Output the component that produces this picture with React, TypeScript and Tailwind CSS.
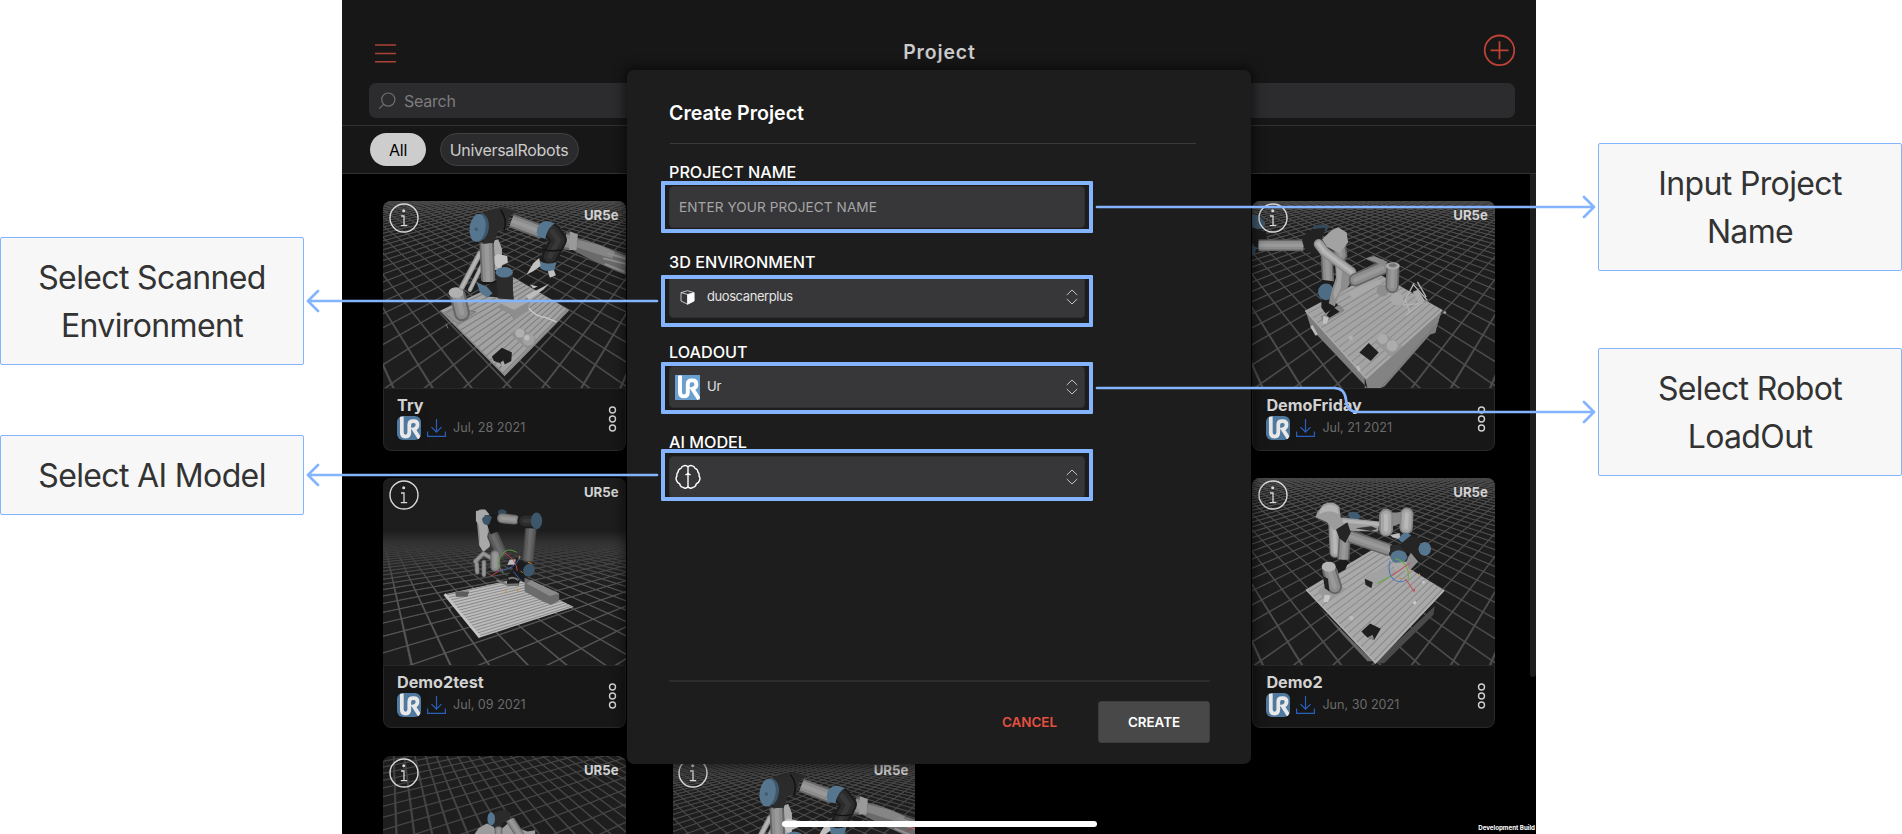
import type { ReactNode } from "react";

type Pt = [number, number];

/* ---------- icons ---------- */

function UrLogo({ className }: { className: string }) {
  return (
    <svg viewBox="0 0 25 25" className={className}>
      <rect width="25" height="25" fill="currentColor" />
      <path
        d="M5 0.6V17.2Q5 21.4 9 21.4Q12.8 21.4 12.8 17.2V9Q12.8 5.4 16.6 5.4H17.6Q21.4 5.4 21.4 9.2Q21.4 12.9 17.4 13.8L24 24"
        fill="none"
        stroke="white"
        strokeWidth="3.9"
      />
    </svg>
  );
}

function InfoIcon() {
  return (
    <svg viewBox="0 0 30 30" className="size-[30px]" fill="none" stroke="#d8d8d8">
      <circle cx="15" cy="15" r="14" strokeWidth="1.4" />
      <circle cx="14.7" cy="7.8" r="1.5" fill="#d8d8d8" stroke="none" />
      <path d="M12 13H15V22.5M11.8 22.6H18.2" strokeWidth="1.3" />
    </svg>
  );
}

function DownloadIcon() {
  return (
    <svg viewBox="0 0 19 18" className="h-[18px] w-[19px]" fill="none" stroke="#2a60bd" strokeWidth="1.2">
      <path d="M9.5 0V13M4.5 8.2L9.5 13.2L14.5 8.2M0.6 12.5V17.3H18.4V12.5" />
    </svg>
  );
}

function MoreIcon() {
  return (
    <svg viewBox="0 0 9 26" className="h-[26px] w-[9px]" fill="none" stroke="#cfcfcf" strokeWidth="1.4">
      <circle cx="4.5" cy="4" r="3" />
      <circle cx="4.5" cy="13" r="3" />
      <circle cx="4.5" cy="22" r="3" />
    </svg>
  );
}

function Updown() {
  return (
    <svg viewBox="0 0 12 16" className="h-4 w-3" fill="none" stroke="#c4c4c4" strokeWidth="1">
      <path d="M0.8 6L6 1L11.2 6M0.8 10L6 15L11.2 10" />
    </svg>
  );
}

function CubeIcon() {
  return (
    <svg viewBox="0 0 15 15" className="size-[15px]" fill="none" stroke="#e8e8e8" strokeWidth="0.8">
      <path d="M7.5 0.7L14 2.6V11L7.5 14.2L1 11V2.6ZM1 2.6L7.5 4.4V14.2" />
      <path d="M7.5 4.4L14 2.6V11L7.5 14.2Z" fill="#fff" />
    </svg>
  );
}

function BrainIcon() {
  return (
    <svg viewBox="0 0 26 26" className="size-[26px]" fill="none" stroke="#fff" strokeWidth="1.4" strokeLinejoin="round">
      <path d="M13 3Q11.5 1 8.6 1.8Q6.6 2.4 6 4.4Q3.4 5 2.9 8.4Q1.4 9.6 2 12Q0.2 14 1.8 17Q2.4 19 4.6 19.6Q5 22.6 8 23.4Q11 25.4 13 22.8" />
      <path d="M13 3Q14.5 1 17.4 1.8Q19.4 2.4 20 4.4Q22.6 5 23.1 8.4Q24.6 9.6 24 12Q25.8 14 24.2 17Q23.6 19 21.4 19.6Q21 22.6 18 23.4Q15 25.4 13 22.8" />
      <path d="M13 2.6V23M10.4 10.8Q12.6 10.6 13 8.6Q13.4 10.6 15.6 10.8" />
    </svg>
  );
}

/* ---------- 3D previews ---------- */

interface FloorProps {
  left: Pt;
  right: Pt;
  base: number;
  origin: number;
  stepL: number;
  stepR: number;
  color?: string;
}

/* Two families of floor lines, each converging on its vanishing point. */
function Floor({ left, right, base, origin, stepL, stepR, color = "#505050" }: FloorProps) {
  const ks = Array.from({ length: 81 }, (_, i) => i - 40);
  const ray = (vp: Pt, x: number) => {
    const ex = vp[0] + (x - vp[0]) * 1.05;
    const ey = vp[1] + (base - vp[1]) * 1.05;
    return `M${vp[0]} ${vp[1]}L${ex - 2.6} ${ey}H${ex + 2.6}Z`;
  };
  return (
    <g fill={color} stroke={color} strokeWidth="2.2">
      {ks.map((k) => (
        <path key={`l${k}`} d={ray(left, origin + k * stepL)} />
      ))}
      {ks.map((k) => (
        <path key={`r${k}`} d={ray(right, origin + k * stepR)} />
      ))}
    </g>
  );
}

function mix(a: Pt, b: Pt, t: number): Pt {
  return [a[0] + (b[0] - a[0]) * t, a[1] + (b[1] - a[1]) * t];
}

/* Slatted table top: slats run from edge a-b to edge d-c. */
function Slats({ a, b, c, d, n, fill = "#a2a2a2", line = "#7d7d7d" }: { a: Pt; b: Pt; c: Pt; d: Pt; n: number; fill?: string; line?: string }) {
  return (
    <g>
      <polygon points={[a, b, c, d].join(" ")} fill={fill} />
      {Array.from({ length: n }, (_, i) => {
        const t = (i + 0.6) / n;
        const p = mix(a, b, t);
        const q = mix(d, c, t);
        return <line key={i} x1={p[0]} y1={p[1]} x2={q[0]} y2={q[1]} stroke={line} strokeWidth="3.2" />;
      })}
    </g>
  );
}

const shades = {
  grey: ["#666666", "#8c8c8c", "#999999"],
  light: ["#858585", "#a6a6a6", "#b8b8b8"],
  dark: ["#1c1c1c", "#2c2c2c", "#383838"],
  blue: ["#3d566a", "#56758e", "#6283a0"],
  dim: ["#484848", "#5d5d5d", "#6b6b6b"],
};

function Tube({ d, w, tone = "grey", cap = "round" }: { d: string; w: number; tone?: keyof typeof shades; cap?: "round" | "butt" }) {
  const s = shades[tone];
  return (
    <g fill="none" strokeLinecap={cap} strokeLinejoin="round">
      <path d={d} stroke={s[0]} strokeWidth={w} />
      <path d={d} stroke={s[1]} strokeWidth={w * 0.74} />
      <path d={d} stroke={s[2]} strokeWidth={w * 0.3} />
    </g>
  );
}

function ArmWithGripper() {
  return (
    <g>
      <path d="M605 140L650 150L700 168L735 184L767 196V255L740 244L700 226L655 205L610 182Z" fill="#6a6a6a" />
      <path d="M625 150L690 166L735 186L728 206L668 188L620 172Z" fill="#858585" />
      <path d="M700 205L767 222M712 190L767 206M705 222L764 246" stroke="#8e8e8e" strokeWidth="6" />
      <Tube d="M585 152L605 156" w={52} cap="butt" />
      <path d="M600 124L624 134L620 180L598 180" fill="#9a9a9a" />
      <Tube d="M546 124L566 150L540 200" w={50} tone="dark" />
      <Tube d="M425 92L515 126" w={42} cap="butt" />
      <path d="M500 128Q502 96 530 93L556 100Q534 110 526 146L506 142Z" fill="#56758e" />
      <path d="M506 212Q530 228 560 216L554 238Q532 250 512 236Z" fill="#56758e" />
      <path d="M516 176Q540 188 572 180" stroke="#111" strokeWidth="4" fill="none" />
      <path d="M508 204L490 220L470 254L490 244L512 228ZM534 244L552 240L558 256L540 264Z" fill="#c0c0c0" />
    </g>
  );
}

function TallArm() {
  return (
    <g>
      <path d="M372 152L385 148L396 176V240H374Z" fill="#a8a8a8" />
      <path d="M362 206L384 192L412 198L414 218L396 226L388 240L374 222Z" fill="#c4c4c4" />
      <Tube d="M276 292L330 190" w={17} tone="light" />
      <Tube d="M300 300L336 226" w={13} tone="light" />
      <Tube d="M350 160L355 276" w={43} cap="butt" />
      <path d="M322 282Q344 300 378 278L396 262L402 300L384 322L350 320Z" fill="#232323" />
      <path d="M378 250Q402 266 429 250V300L432 330L384 326Z" fill="#2b2b2b" />
      <path d="M332 274Q354 290 380 272" stroke="#111" strokeWidth="4" fill="none" />
      <ellipse cx="403" cy="247" rx="26" ry="16" fill="#56758e" />
      <path d="M320 278L350 290L368 310L352 324L330 308Z" fill="#56758e" />
      <path d="M340 68L366 58L402 52L440 64L416 82L410 118L384 124L372 158L340 162Z" fill="#2b2b2b" />
      <path d="M392 60Q414 88 402 122" stroke="#0e0e0e" strokeWidth="4" fill="none" />
      <ellipse cx="330" cy="113" rx="27" ry="42" fill="#3d566a" transform="rotate(8 330 113)" />
      <ellipse cx="323" cy="114" rx="24" ry="42" fill="#56758e" transform="rotate(8 323 114)" />
      <circle cx="319" cy="118" r="5" fill="#43596c" />
    </g>
  );
}

function SceneTry() {
  return (
    <>
      <Floor left={[-258, -125]} right={[1068, -125]} base={582} origin={411} stepL={115.5} stepR={115.5} />
      <Slats a={[212, 362]} b={[404, 556]} c={[596, 360]} d={[430, 262]} n={15} />
      <path d="M212 362L404 556L596 360" stroke="#8a8a8a" strokeWidth="5" fill="none" />
      <path d="M474 352Q494 380 530 384L560 396" stroke="#c9c9c9" strokeWidth="4" fill="none" />
      <path d="M468 318L538 282L520 300L478 330ZM480 284L504 290L490 296Z" fill="#bdbdbd" />
      <path d="M390 340L432 360L476 336V362L430 392L426 376L388 356Z" fill="#8d8d8d" />
      <path d="M390 340L440 330L476 336L432 360Z" fill="#a9a9a9" />
      <path d="M366 500L396 474L426 488L424 514L404 524L402 532L390 520L372 514Z" fill="#1e1e1e" />
      <path d="M392 518L400 512L406 528L398 534Z" fill="#aaa" />
      <path d="M420 432L450 412L498 446L472 478Z" fill="#909090" />
      <circle cx="450" cy="430" r="14" fill="#b0b0b0" />
      <circle cx="476" cy="450" r="18" fill="#a2a2a2" />
      <circle cx="471" cy="444" r="8" fill="#bcbcbc" />
      <path d="M226 372L250 356L318 366L262 402ZM228 402L234 416" fill="#8f8f8f" stroke="#777" strokeWidth="3" />
      <Tube d="M264 318L276 370" w={48} tone="grey" />
      <ellipse cx="258" cy="308" rx="22" ry="16" fill="#b0b0b0" />
      <TallArm />
      <ArmWithGripper />
    </>
  );
}

function SceneDemo2Test() {
  return (
    <>
      <Floor left={[20, 130]} right={[1500, 130]} base={600} origin={125} stepL={116} stepR={205} color="#585858" />
      <rect x="39" y="39" width="730" height="330" fill="url(#haze)" />
      <Slats a={[330, 518]} b={[224, 388]} c={[440, 342]} d={[612, 427]} n={17} fill="#bdbdbd" line="#8c8c8c" />
      <path d="M224 388L330 518" stroke="#c6c6c6" strokeWidth="8" />
      <path d="M256 380H298L292 396H258ZM234 424L244 434L238 440Z" fill="#5c5c5c" />
      <Tube d="M336 150L344 236" w={34} tone="light" />
      <path d="M318 138L346 134L358 148L352 200L360 244L340 262L328 240L332 186L318 168Z" fill="#a8a8a8" />
      <Tube d="M316 290L340 266L372 284M320 296L322 322M342 292L342 330" w={14} />
      <Tube d="M370 214L392 262" w={36} tone="dim" />
      <Tube d="M376 270V306" w={30} tone="grey" />
      <Tube d="M483 190L474 288" w={34} tone="dim" cap="butt" />
      <path d="M344 152L372 148L390 170L386 198L362 208L354 186Z" fill="#1a1a1a" />
      <path d="M336 162Q350 142 366 156L358 178Q340 186 336 162Z" fill="#3c5568" />
      <path d="M384 140Q396 126 410 140L406 164H388Z" fill="#344b5c" />
      <Tube d="M396 160L434 164" w={30} tone="grey" />
      <Tube d="M464 168L492 168" w={44} tone="dark" />
      <ellipse cx="500" cy="168" rx="17" ry="25" fill="#3d566a" />
      <path d="M412 292L440 282L482 300L476 336L450 346L446 362H410L414 332L430 312Z" fill="#1c1c1c" />
      <path d="M420 284H438L434 300H412Z" fill="#bbb" />
      <ellipse cx="477" cy="316" rx="17" ry="20" fill="#3d566a" transform="rotate(25 477 316)" />
      <path d="M464 338L568 386V408L544 420L522 412L464 380Z" fill="#6b6b6b" />
      <path d="M484 346L568 386L540 394L470 356Z" fill="#8a8a8a" />
      <path d="M380 346L412 360L446 358M416 342Q430 334 446 346" stroke="#777" strokeWidth="6" fill="none" />
      <g fill="none" strokeWidth="3">
        <path d="M440 262Q414 246 396 268Q376 296 400 324" stroke="#5d9a3e" />
        <path d="M404 264Q440 284 442 318M362 334L398 312" stroke="#c23e48" />
        <path d="M388 318Q436 314 452 274M430 320L452 346" stroke="#3d62b4" />
        <path d="M448 272V282M474 292L486 296M452 318L458 324M408 374V386M444 372V382" stroke="#c98a2c" />
      </g>
    </>
  );
}

function SceneFriday() {
  return (
    <>
      <Floor left={[-258, -125]} right={[1068, -125]} base={582} origin={411} stepL={115.5} stepR={115.5} />
      <path d="M198 362L376 562V595H384L216 418ZM424 595L606 366L596 396L588 430L572 434L436 590Z" fill="#7c7c7c" />
      <path d="M376 562L606 360L596 400L580 412L424 595H384Z" fill="#838383" />
      <Slats a={[198, 362]} b={[380, 566]} c={[608, 360]} d={[410, 248]} n={14} fill="#a4a4a4" line="#8a8a8a" />
      <path d="M198 362L380 566L608 360" stroke="#a9a9a9" strokeWidth="5" fill="none" />
      <path d="M216 408L232 436M354 528L360 544" stroke="#bbb" strokeWidth="8" />
      <path d="M360 488L388 460L418 488L394 514Z" fill="#1f1f1f" />
      <path d="M408 458L432 430L490 470L456 502Z" fill="#969696" />
      <circle cx="430" cy="448" r="15" fill="#acacac" />
      <circle cx="458" cy="468" r="17" fill="#acacac" />
      <circle cx="334" cy="444" r="7" fill="#b0b0b0" />
      <path d="M38 72L60 78L78 98L72 116H38Z" fill="#3d566a" />
      <path d="M38 112L80 128L84 150L48 168L38 160Z" fill="#1b1b1b" />
      <path d="M38 166L52 172L46 192H38Z" fill="#34495a" />
      <Tube d="M58 166H192" w={34} cap="butt" />
      <Tube d="M262 196L266 276" w={36} tone="grey" cap="butt" />
      <path d="M218 114Q238 96 268 108L262 124L230 122Z" fill="#34495a" />
      <path d="M188 150Q196 124 232 116L258 114L246 148L236 192Q196 194 188 150Z" fill="#222" />
      <path d="M246 270L282 274L280 330L300 350L296 374L264 378L246 354Z" fill="#1d1d1d" />
      <ellipse cx="260" cy="306" rx="24" ry="25" fill="#4e6c84" />
      <Tube d="M296 140L304 196" w={40} tone="grey" />
      <path d="M248 148L276 122L296 112L322 128L326 158L300 190L262 170Z" fill="#a2a2a2" />
      <path d="M286 206L318 226L338 262L326 292L300 312L286 350L268 340L278 300L290 262Z" fill="#8d8d8d" />
      <path d="M290 214L308 240L304 296L286 330L282 310L294 270Z" fill="#a3a3a3" />
      <Tube d="M238 162L256 186L336 246" w={30} tone="light" />
      <Tube d="M348 270L430 234" w={40} tone="grey" />
      <path d="M326 308L420 268L428 280L340 326Z" fill="#a9a9a9" />
      <path d="M378 206L404 198L446 216L430 226Z" fill="#8a8a8a" />
      <circle cx="430" cy="302" r="18" fill="#8e8e8e" />
      <Tube d="M460 238L458 290" w={40} tone="grey" />
      <ellipse cx="460" cy="228" rx="21" ry="11" fill="#a8a8a8" />
      <ellipse cx="460" cy="226" rx="12" ry="6" fill="#777" />
      <circle cx="472" cy="327" r="19" fill="#a9a9a9" />
      <path d="M524 280L490 344M520 282L564 332M534 276L560 322M490 346L552 340M500 376L546 340M498 330L510 366" stroke="#b3b3b3" strokeWidth="4" fill="none" />
      <path d="M520 306L536 300L556 332L540 344Z" fill="#a8a8a8" />
      <path d="M244 380L300 344L316 362L252 402Z" fill="#858585" />
      <path d="M262 376L280 350L300 366L270 384Z" fill="#1d1d1d" />
      <path d="M252 378L268 384L262 402H250Z" fill="#c0c0c0" />
      <circle cx="616" cy="368" r="4" fill="#aaa" />
    </>
  );
}

function SceneDemo2() {
  return (
    <>
      <Floor left={[-258, -119]} right={[1068, -119]} base={588} origin={411} stepL={115.5} stepR={115.5} />
      <path d="M586 424L582 450L434 596H410L430 572Z" fill="#4a4a4a" />
      <path d="M240 428L400 590H384L310 510Z" fill="#666" />
      <Slats a={[200, 374]} b={[408, 594]} c={[614, 376]} d={[410, 248]} n={16} fill="#a9a9a9" line="#8b8b8b" />
      <path d="M200 374L408 594L614 376" stroke="#b0b0b0" strokeWidth="5" fill="none" />
      <path d="M366 500L392 476L424 492L404 526L384 518Z" fill="#1f1f1f" />
      <path d="M384 518L400 510L404 526Z" fill="#888" />
      <path d="M376 338L440 304L472 318L408 366L378 356Z" fill="#a2a2a2" />
      <path d="M376 342L400 352L396 370L378 360Z" fill="#222" />
      <Tube d="M284 180L288 262" w={34} tone="light" />
      <Tube d="M316 210L312 284" w={36} tone="grey" cap="butt" />
      <path d="M326 146Q346 132 364 154L356 166L330 160Z" fill="#3f5c72" />
      <path d="M228 156L234 142L252 118Q280 104 300 126L304 158L330 160L420 170L416 200L340 198L284 196L262 172Z" fill="#9c9c9c" />
      <path d="M244 132Q268 108 294 126L298 148Q270 130 240 148Z" fill="#b4b4b4" />
      <path d="M310 168L420 178" stroke="#b4b4b4" strokeWidth="10" />
      <path d="M290 194L324 172L334 202L318 234L300 220Z" fill="#252525" />
      <path d="M348 190L396 184L414 192L394 198Z" fill="#333" />
      <Tube d="M330 214L452 256" w={38} tone="grey" cap="butt" />
      <path d="M440 146L500 140V170L454 186Z" fill="#8a8a8a" />
      <Tube d="M440 152L440 194" w={42} tone="light" />
      <Tube d="M502 148L500 188" w={40} tone="light" />
      <path d="M452 210L480 204L484 224L460 218Z" fill="#bcbcbc" />
      <path d="M292 296L328 288L318 314L296 326ZM250 324L268 318L280 384L258 388Z" fill="#1c1c1c" />
      <path d="M476 222L494 202L516 210L494 240Z" fill="#56758e" />
      <path d="M482 238L516 210L548 224L536 244L566 282L546 286L500 262L504 280L484 266Z" fill="#252525" />
      <path d="M452 242L480 238L500 262L480 282L452 270Z" fill="#2c2c2c" />
      <ellipse cx="478" cy="276" rx="25" ry="20" fill="#56758e" />
      <ellipse cx="556" cy="252" rx="19" ry="21" fill="#56758e" />
      <path d="M514 264L536 290L512 316L496 298Z" fill="#8f8f8f" />
      <path d="M456 296L500 290L510 316L470 320Z" fill="#a9a9a9" />
      <path d="M236 378L262 350L322 372L262 414Z" fill="#999" />
      <Tube d="M270 316L286 366" w={44} tone="grey" />
      <ellipse cx="268" cy="306" rx="21" ry="15" fill="#b5b5b5" />
      <path d="M252 334L266 342L270 380L256 370Z" fill="#222" />
      <path d="M256 390L274 392L266 412H252Z" fill="#c8c8c8" />
      <circle cx="336" cy="460" r="7" fill="#bcbcbc" />
      <circle cx="526" cy="414" r="5" fill="#ccc" />
      <circle cx="552" cy="352" r="4" fill="#ccc" />
      <g fill="none" strokeWidth="3">
        <path d="M468 282Q512 292 506 346M414 356L458 332" stroke="#67a844" />
        <path d="M452 288Q442 330 466 346Q484 356 500 346" stroke="#4f74bd" />
        <path d="M458 332L512 294M498 342L524 380M518 374L524 380L526 372" stroke="#c25058" />
        <path d="M480 338L486 342M540 326V332M506 316L510 322" stroke="#d08a2c" />
      </g>
    </>
  );
}

function SceneFive() {
  return (
    <>
      <Floor left={[20, -345]} right={[1900, -345]} base={282} origin={100} stepL={58} stepR={150} color="#474747" />
      <g transform="scale(1.148 1) translate(-112 -45)">
        <path d="M350 282L362 262L376 252L384 248L398 256L424 262L440 246L462 250L466 262L490 272L510 268V278L490 290H350Z" fill="#9c9c9c" />
        <path d="M404 214L430 206L448 218L440 240L424 246L420 266L408 270L396 250Z" fill="#2b2b2b" />
        <Tube d="M444 236L474 290" w={24} cap="butt" />
        <Tube d="M414 266V300" w={20} />
        <ellipse cx="395" cy="234" rx="10" ry="20" fill="#56758e" />
      </g>
    </>
  );
}

function SceneSix() {
  return (
    <>
      <Floor left={[-258, -125]} right={[1068, -125]} base={582} origin={411} stepL={115.5} stepR={115.5} color="#4a4a4a" />
      <TallArm />
      <ArmWithGripper />
      <path d="M742 232Q752 216 767 220" stroke="#b23a40" strokeWidth="3" fill="none" />
    </>
  );
}

/* ---------- project cards ---------- */

function Preview({ viewBox, children }: { viewBox: string; children: ReactNode }) {
  return (
    <svg viewBox={viewBox} preserveAspectRatio="none" className="block h-full w-full bg-[#1e1e1e]">
      <defs>
        <linearGradient id="haze" x1="0" y1="0" x2="0" y2="1">
          <stop offset="0" stopColor="#1d1d1d" />
          <stop offset="0.48" stopColor="#1d1d1d" />
          <stop offset="0.58" stopColor="#303030" />
          <stop offset="0.66" stopColor="#303030" stopOpacity="0.7" />
          <stop offset="1" stopColor="#303030" stopOpacity="0" />
        </linearGradient>
      </defs>
      {children}
    </svg>
  );
}

interface CardProps {
  viewBox: string;
  scene: ReactNode;
  title?: string;
  date?: string;
  className: string;
}

function ProjectCard({ viewBox, scene, title, date, className }: CardProps) {
  return (
    <article className={`flex h-[250px] flex-col overflow-hidden rounded-[8px] bg-[#171717] ${className}`}>
      <div className="relative h-[187px] shrink-0">
        <Preview viewBox={viewBox}>{scene}</Preview>
        <div className="absolute inset-x-0 top-0 flex items-start justify-between pt-[2px] pr-[7px] pl-[5.5px]">
          <InfoIcon />
          <span className="pt-[4px] text-[13.2px] leading-4 font-bold text-[#d2d2d2]">UR5e</span>
        </div>
      </div>
      {title && (
        <div className="flex grow justify-between rounded-b-[8px] border border-[#282828] pr-[8px] pl-[13px]">
          <div className="flex flex-col pt-[6px]">
            <h3 className="text-[16.2px] leading-5 font-bold text-[#d2d2d2]">{title}</h3>
            <div className="mt-px flex items-center">
              <UrLogo className="size-6 rounded-[6px] text-[#5684ad] opacity-90" />
              <span className="ml-[6px]">
                <DownloadIcon />
              </span>
              <span className="ml-[7px] text-[12.6px] leading-4 text-[#6b6b6b]">{date}</span>
            </div>
          </div>
          <span className="pt-[17px]">
            <MoreIcon />
          </span>
        </div>
      )}
    </article>
  );
}

/* ---------- dialog ---------- */

function Field({ label, frame, children }: { label: string; frame: string; children: ReactNode }) {
  return (
    <div className="flex h-[90px] flex-col gap-1">
      <label className="text-[16.2px] leading-5 font-medium whitespace-nowrap text-white">{label}</label>
      <div className="relative flex h-[42px] w-[416px] items-center rounded-[4px] border border-[#2f2f30] bg-[#373739]">
        {children}
        <span className={`absolute -left-[9px] h-[52px] w-[432px] rounded-[1px] border-4 border-[#85b4ff] ${frame}`} />
      </div>
    </div>
  );
}

function CreateDialog() {
  return (
    <section className="absolute top-[70px] left-[285px] flex h-[694px] w-[624px] flex-col rounded-[7px] bg-[#1d1d1d] pt-[31px] pr-[41px] pb-[21px] pl-[42px] shadow-[0_0_12px_3px_rgba(0,0,0,0.55)]">
      <h2 className="text-[19.6px] leading-6 font-semibold text-white">Create Project</h2>
      <hr className="mt-[18px] mr-[14px] ml-px border-[#3a3a3a]" />
      <div className="mt-[18px] flex flex-col">
        <Field label="PROJECT NAME" frame="-top-[6px]">
          <span className="pl-[9px] text-[13.6px] tracking-[0.08px] text-[#a5a5a7]">ENTER YOUR PROJECT NAME</span>
        </Field>
        <Field label="3D ENVIRONMENT" frame="-top-[2px]">
          <span className="ml-[10px]"><CubeIcon /></span>
          <span className="ml-[12px] grow text-[13px] tracking-[-0.42px] text-[#e3e3e3]">duoscanerplus</span>
          <span className="mr-[6px]"><Updown /></span>
        </Field>
        <Field label="LOADOUT" frame="-top-[5px]">
          <UrLogo className="ml-[5px] size-[25px] text-[#69a0d0]" />
          <span className="ml-[7px] grow text-[13px] tracking-[-0.2px] text-[#e3e3e3]">Ur</span>
          <span className="mr-[6px]"><Updown /></span>
        </Field>
        <Field label="AI MODEL" frame="-top-[8px]">
          <span className="ml-[5px] grow"><BrainIcon /></span>
          <span className="mr-[6px]"><Updown /></span>
        </Field>
      </div>
      <footer className="mt-auto flex items-center justify-end gap-[41px] border-t-2 border-[#2c2c2c] pt-[19px]">
        <button className="text-[13.4px] font-semibold text-[#e5503f]">CANCEL</button>
        <button className="h-[42px] w-[112px] rounded-[3px] border border-[#3d3d3d] bg-[#484848] text-[13.4px] font-semibold text-white">
          CREATE
        </button>
      </footer>
    </section>
  );
}

/* ---------- tablet screen ---------- */

function Tablet() {
  return (
    <main className="relative flex h-[834px] w-[1194px] shrink-0 flex-col overflow-hidden bg-black">
      <header className="flex h-[125px] shrink-0 flex-col bg-[#171717] pr-[21px] pl-[27px]">
        <div className="flex h-[83px] items-start justify-between pl-[6px]">
          <svg viewBox="0 0 21 19" className="mt-[44px] h-[19px] w-[21px]" stroke="#ab4238" strokeWidth="1.5">
            <path d="M0 1H21M0 9.4H21M0 17.8H21" />
          </svg>
          <h1 className="mt-[39px] text-[19.4px] leading-[26px] font-semibold tracking-[0.9px] text-[#cbcbcb]">Project</h1>
          <svg viewBox="0 0 32 32" className="mt-[34px] size-8" stroke="#bf4236" strokeWidth="1.8" fill="none">
            <circle cx="16.5" cy="16.3" r="14.8" />
            <path d="M7.5 16.3H25.5M16.5 7.3V25.3" />
          </svg>
        </div>
        <div className="flex h-[35px] items-center rounded-[7px] bg-[#2c2c2e] pl-[9px]">
          <svg viewBox="0 0 18 18" className="size-[18px]" stroke="#6f6f71" strokeWidth="1.2" fill="none">
            <circle cx="10.3" cy="7.6" r="6.6" />
            <path d="M5.6 12.3L1.2 16.7" />
          </svg>
          <span className="ml-[8px] pt-px text-[16px] tracking-[-0.25px] text-[#7c7c7e]">Search</span>
        </div>
      </header>
      <nav className="flex h-[49px] shrink-0 items-center gap-[14px] border-y border-[#323232] bg-[#171717] pl-[27.5px]">
        <span className="flex h-[33px] w-[56px] items-center justify-center rounded-full bg-[#cdcdcd] pl-px text-[16px] tracking-[-0.2px] text-black">All</span>
        <span className="flex h-[33px] w-[139px] items-center justify-center rounded-full border border-[#414143] bg-[#2b2b2d] text-[16px] tracking-[-0.3px] text-[#cbcbcb]">
          UniversalRobots
        </span>
      </nav>
      <div className="flex h-[660px] justify-between">
        <div className="ml-[41px] grid h-full auto-rows-[250px] grid-cols-[242.5px_242.5px_242.5px_242.5px] gap-x-[47.3px] gap-y-[27.4px] overflow-hidden pt-[27px]">
          <ProjectCard viewBox="39 33 728 562" scene={<SceneTry />} title="Try" date="Jul, 28 2021" className="col-start-1" />
          <ProjectCard viewBox="38 33 727 562" scene={<SceneFriday />} title="DemoFriday" date="Jul, 21 2021" className="col-start-4" />
          <ProjectCard viewBox="39 39 728 562" scene={<SceneDemo2Test />} title="Demo2test" date="Jul, 09 2021" className="col-start-1" />
          <ProjectCard viewBox="38 39 727 562" scene={<SceneDemo2 />} title="Demo2" date="Jun, 30 2021" className="col-start-4" />
          <ProjectCard viewBox="0 0 728 562" scene={<SceneFive />} className="col-start-1" />
          <ProjectCard viewBox="39 4 728 562" scene={<SceneSix />} className="col-start-2" />
        </div>
        <div className="h-[503px] w-[6px] rounded-b-full bg-[#1d1d1f]" />
      </div>
      <CreateDialog />
      <div className="absolute bottom-[7px] left-[440px] h-[6px] w-[315px] rounded-full bg-white" />
      <span className="absolute right-px bottom-[2px] text-[6.2px] leading-[8px] font-bold whitespace-nowrap text-white">Development Build</span>
    </main>
  );
}

function Note({ children }: { children: ReactNode }) {
  return (
    <div className="w-[304px] rounded-[2px] border border-[#85b4ff] bg-[#f7f7f7] px-[31px] pt-[16px] pb-[14px] text-center text-[32px] leading-[48px] tracking-[-0.64px] text-[#333]">
      {children}
    </div>
  );
}

export default function App() {
  return (
    <div className="relative flex h-[834px] w-[1902px] overflow-hidden bg-white font-['Inter',sans-serif]">
      <aside className="mr-[38px] flex w-[304px] shrink-0 flex-col gap-[70px] pt-[237px]">
        <Note>Select Scanned Environment</Note>
        <Note>Select AI Model</Note>
      </aside>
      <Tablet />
      <aside className="ml-[62px] flex w-[304px] shrink-0 flex-col gap-[77px] pt-[143px]">
        <Note>Input Project Name</Note>
        <Note>Select Robot LoadOut</Note>
      </aside>
      <svg
        viewBox="0 0 1902 834"
        className="pointer-events-none absolute inset-0 h-[834px] w-[1902px]"
        fill="none"
        stroke="#85b4ff"
        strokeWidth="2.7"
        strokeLinecap="round"
        strokeLinejoin="round"
      >
        <path d="M657 301H308M318 291L308 301L318 311" />
        <path d="M657 475H308M318 465L308 475L318 485" />
        <path d="M1097 207H1594M1584 197L1594 207L1584 217" />
        <path d="M1097 388H1334Q1345 388 1346 400Q1347 412 1358 412H1594M1584 402L1594 412L1584 422" />
      </svg>
    </div>
  );
}
